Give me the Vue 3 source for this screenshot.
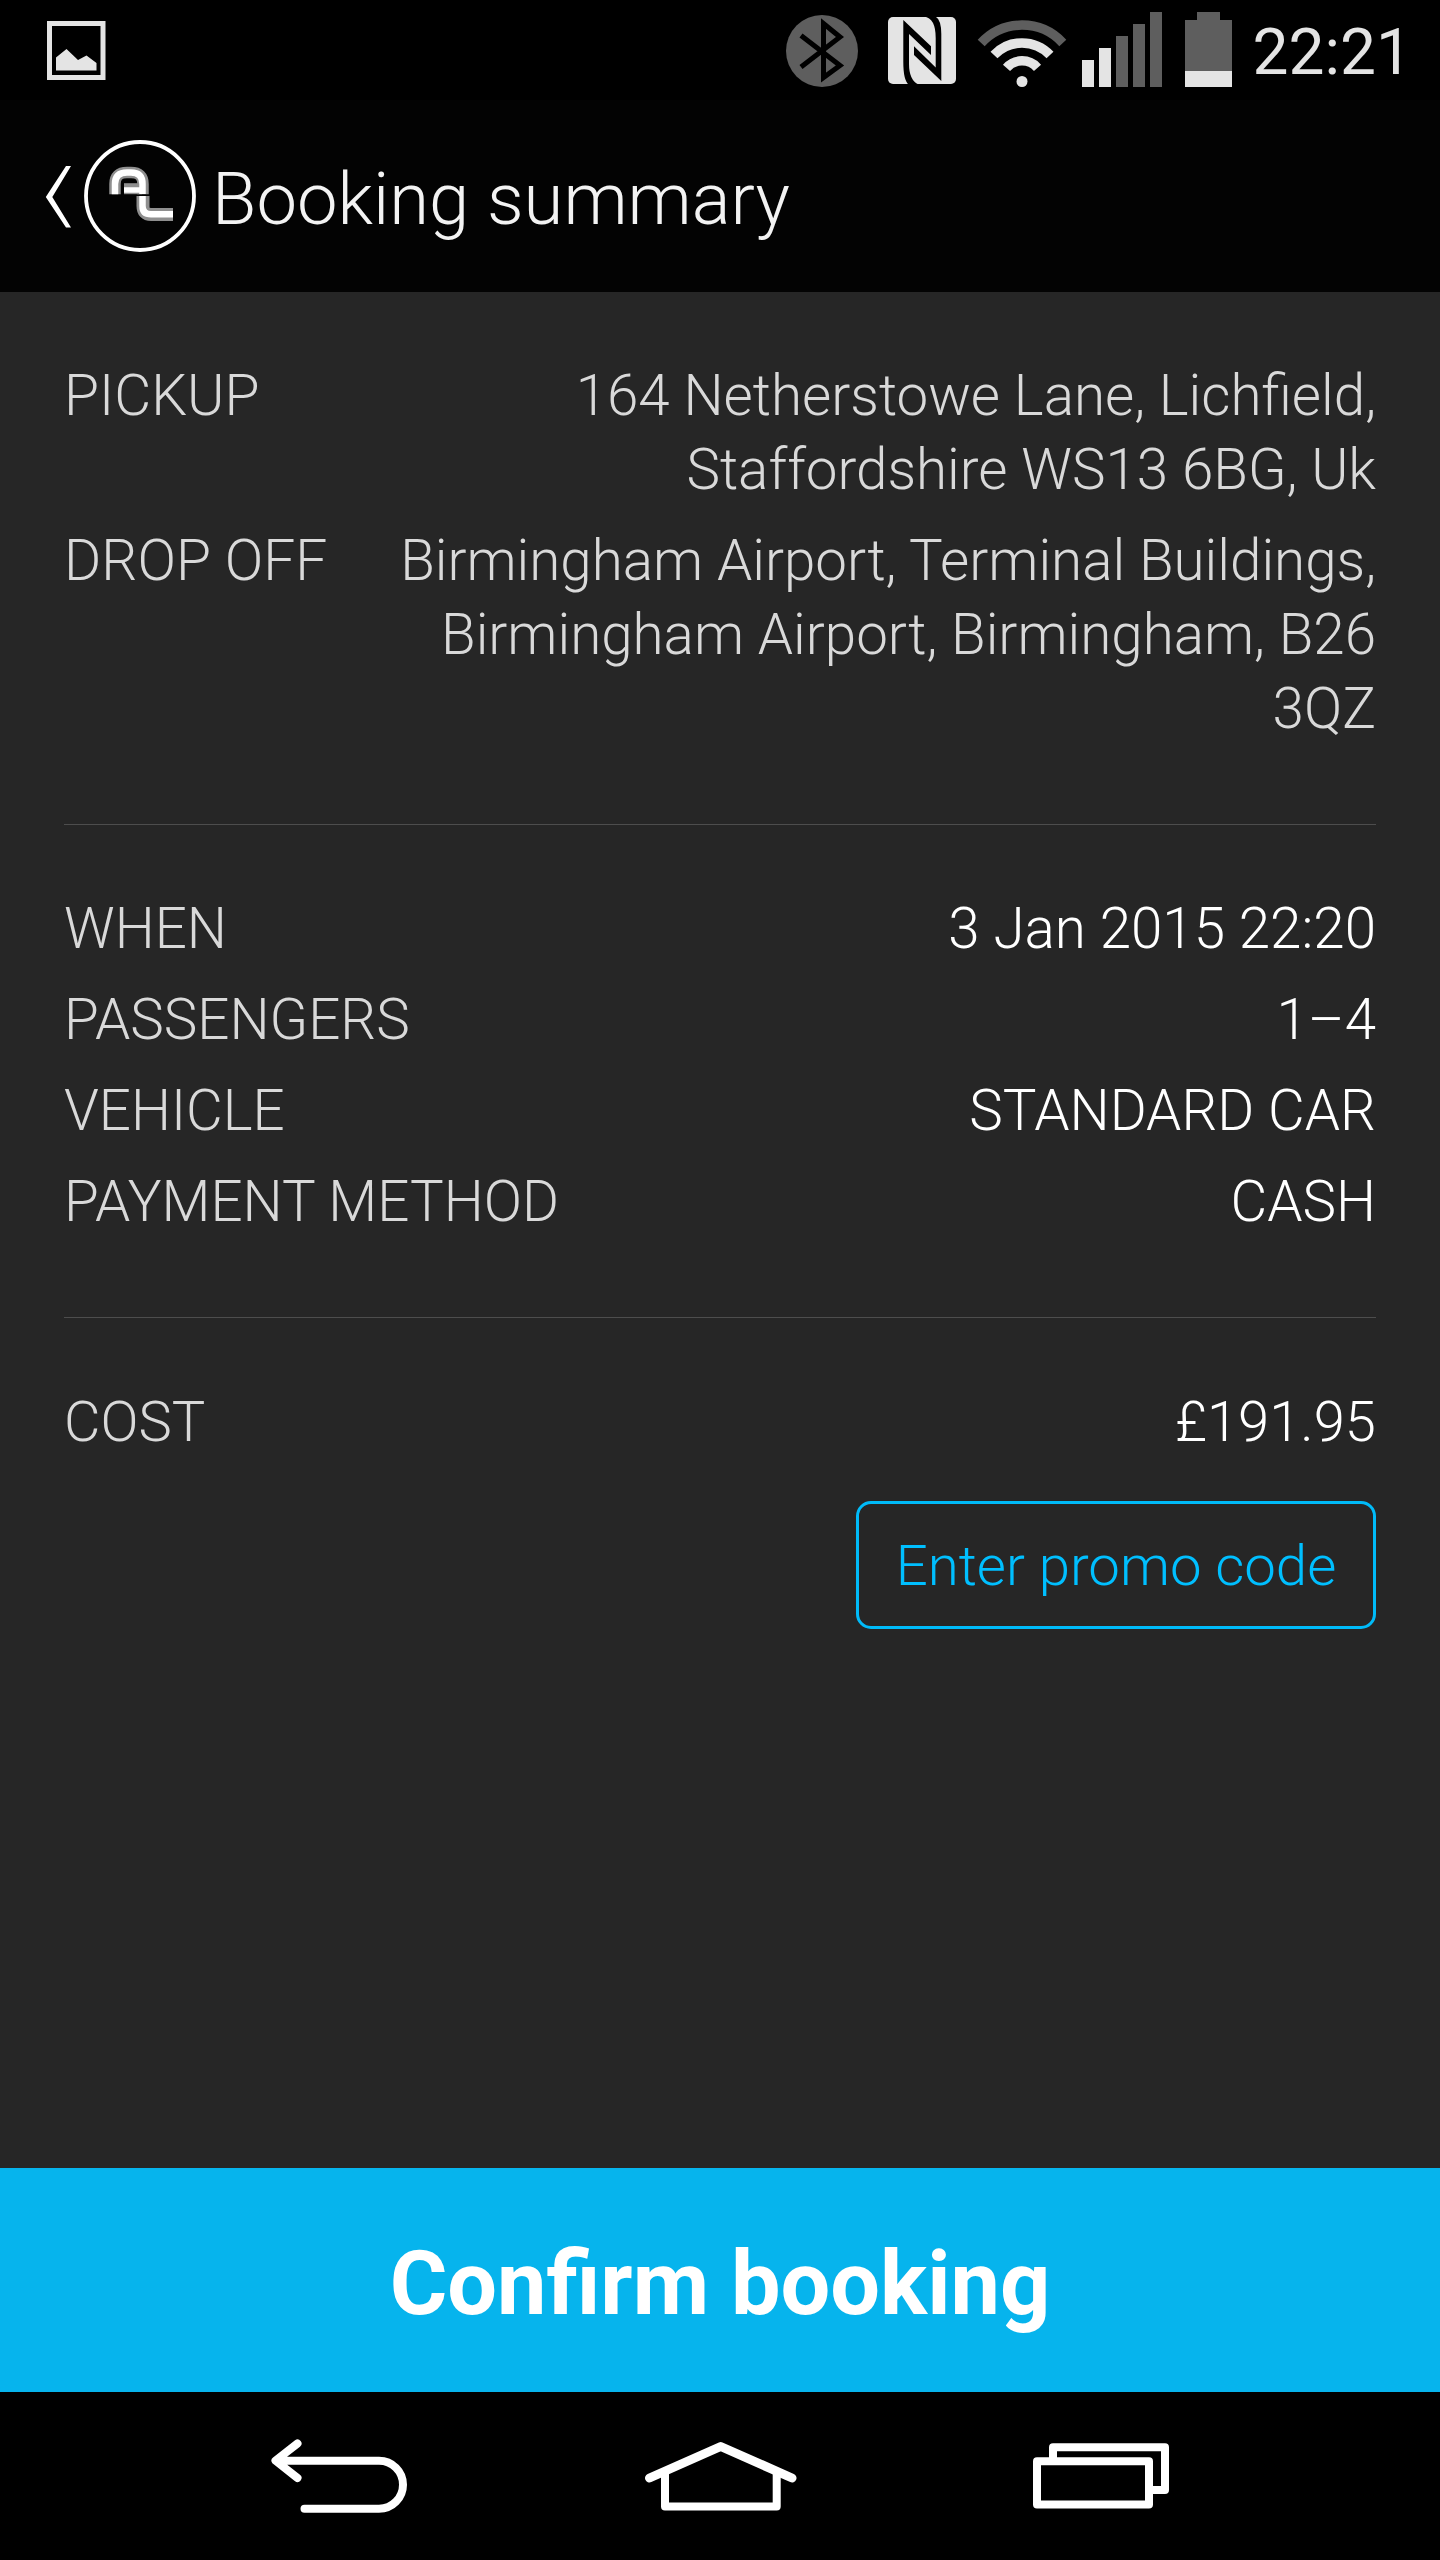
<script setup>
const route = [
  { label: 'PICKUP', value: '164 Netherstowe Lane, Lichfield, Staffordshire WS13 6BG, Uk' },
  { label: 'DROP OFF', value: 'Birmingham Airport, Terminal Buildings, Birmingham Airport, Birmingham, B26 3QZ' },
]
const details = [
  { label: 'WHEN', value: '3 Jan 2015 22:20' },
  { label: 'PASSENGERS', value: '1–4' },
  { label: 'VEHICLE', value: 'STANDARD CAR' },
  { label: 'PAYMENT METHOD', value: 'CASH' },
]
</script>

<template>
  <div class="screen">
    <header class="status">
      <svg class="shot" width="60" height="60" viewBox="0 0 60 60">
        <rect x="3.5" y="3.5" width="53.5" height="54" fill="none" stroke="#e4e4e4" stroke-width="5" />
        <path d="M10 37.500L20.500 29L32 40L40.500 35.500L50.500 43V50.500H10Z" fill="#e4e4e4" />
      </svg>

      <!-- bluetooth, NFC, wifi, signal, battery -->
      <svg class="indicators" width="450" height="100" viewBox="784 0 450 100">
        <circle cx="822" cy="51" r="36" fill="#5e5e5e" />
        <path d="M801 35.500L840 65.500L823.500 77.500V23.500L840 37L801 67" fill="none" stroke="#000" stroke-width="5" />

        <rect x="888" y="17" width="68" height="67" rx="5" fill="#e4e4e4" />
        <path d="M903.300 20L931 46.300V55L909 34V64Q909 80 918.500 84.500H908.500Q903.300 80 903.300 62Z" fill="#000" />
        <path d="M914 46.300V55L941.300 81V34Q941.300 20 935.500 16.500H924Q935.700 18 935.700 38V67.500Z" fill="#000" />

        <g fill="none" stroke-width="9.5">
          <path d="M981.200 43A55.500 55.500 0 0 1 1062.800 43" stroke="#5e5e5e" />
          <path d="M994 55A38.500 38.500 0 0 1 1050 55" stroke="#e4e4e4" />
          <path d="M1006.500 67.800A20.800 20.800 0 0 1 1037.500 67.800" stroke="#e4e4e4" />
        </g>
        <circle cx="1022" cy="81.500" r="5.500" fill="#e4e4e4" />

        <path d="M1082 60h12v27h-12zM1099 48h12v39h-12z" fill="#e4e4e4" />
        <path d="M1116 36h12v51h-12zM1133 24h12v63h-12zM1150 12h12v75h-12z" fill="#5e5e5e" />

        <path d="M1197 12h23v8h12v51h-47V20h12z" fill="#5e5e5e" />
        <path d="M1185 71h47v16h-47z" fill="#e4e4e4" />
      </svg>
      <time class="clock">22:21</time>
    </header>

    <div class="titlebar">
      <svg class="brand" width="160" height="120" viewBox="40 136 160 120">
        <path d="M66 166H71L52.300 197L71 227.500H66L45.800 197Z" fill="#fff" />
        <circle cx="140" cy="196" r="54" fill="none" stroke="#fff" stroke-width="3.800" />
        <g fill="none">
          <path d="M115 194.300V184Q115 172.500 127 172.500H131Q143 172.500 143 184V194.300" stroke="#8f8f8f" stroke-width="11.500" />
          <path d="M124 188.700H142" stroke="#8f8f8f" stroke-width="11" />
          <path d="M115 194.300V184Q115 172.500 127 172.500H131Q142.500 172.500 142.500 184V194" stroke="#fff" stroke-width="6.500" />
          <path d="M124 190H144" stroke="#fff" stroke-width="5.500" />
          <path d="M143 196V206Q143 214.500 151 214.500H173" stroke="#8f8f8f" stroke-width="13" />
          <path d="M142.500 196V206Q142.500 214.300 151 214.300H173" stroke="#fff" stroke-width="6.500" />
        </g>
      </svg>
      <h1>Booking summary</h1>
    </div>

    <main class="summary">
      <section class="route">
        <div v-for="r in route" :key="r.label" class="row">
          <span class="label">{{ r.label }}</span>
          <span class="value">{{ r.value }}</span>
        </div>
      </section>
      <section class="details">
        <div v-for="r in details" :key="r.label" class="row">
          <span class="label">{{ r.label }}</span>
          <span class="value">{{ r.value }}</span>
        </div>
      </section>
      <section class="cost">
        <div class="row">
          <span class="label">COST</span>
          <span class="value">£191.95</span>
        </div>
        <button class="promo">Enter promo code</button>
      </section>
    </main>

    <button class="confirm">Confirm booking</button>

    <nav class="nav">
      <svg width="144" height="88" viewBox="268 2434 144 88" fill="none" stroke="#fff" stroke-width="8" stroke-linecap="round" stroke-linejoin="round">
        <path d="M297.500 2443.500L275.500 2460.700L297.500 2478M276 2460.700H379A24 24 0 0 1 379 2508.700H304.500" />
      </svg>
      <svg width="152" height="88" viewBox="645 2434 152 88" fill="none" stroke="#fff" stroke-width="8" stroke-linecap="round" stroke-linejoin="round">
        <path d="M649.500 2478L720.700 2446.500L792 2478" stroke-width="9" />
        <path d="M665 2474V2506.500H776.700V2474" />
      </svg>
      <svg width="144" height="88" viewBox="1029 2434 144 88" fill="none" stroke="#fff" stroke-width="8" stroke-linejoin="round">
        <path d="M1053 2459V2447.300H1165V2490H1152" />
        <rect x="1037" y="2461.300" width="112" height="43.200" />
      </svg>
    </nav>
  </div>
</template>

<style>
body {
  margin: 0;
  background: #000;
}
</style>

<style scoped>
.screen {
  display: flex;
  flex-direction: column;
  width: 1440px;
  height: 2560px;
  background: #262626;
  font-family: Roboto, sans-serif;
  font-weight: 300;
  overflow: hidden;
}
.status {
  display: flex;
  align-items: center;
  box-sizing: border-box;
  height: 100px;
  padding-left: 46px;
  background: #000;
}
.indicators {
  margin-left: auto;
}
.clock {
  width: 187.500px;
  margin-left: 18.500px;
  padding-top: 6px;
  font-size: 64px;
  line-height: 64px;
  font-weight: 400;
  color: #e4e4e4;
}
.titlebar {
  display: flex;
  align-items: center;
  height: 192px;
  padding-left: 40px;
  background: #030303;
}
.titlebar h1 {
  margin: 0 0 0 12px;
  padding-top: 7px;
  font-size: 72.400px;
  line-height: 80px;
  font-weight: 300;
  color: #f3f3f3;
}
.summary {
  flex: 1;
  padding: 67px 64px 0;
  font-size: 56.500px;
  line-height: 74px;
}
.row {
  display: flex;
  justify-content: space-between;
  gap: 64px;
}
.label {
  flex: none;
  color: #d9d9d9;
}
.value {
  text-align: right;
  color: #fff;
}
.route,
.details {
  display: flex;
  flex-direction: column;
  gap: 17px;
  padding-bottom: 78px;
  border-bottom: 1px solid #4d4d4d;
}
.route .label {
  font-size: 56.900px;
}
.route .value {
  color: #d9d9d9;
}
.details {
  padding-top: 67px;
}
.cost {
  display: flex;
  flex-direction: column;
  padding-top: 67px;
  font-size: 56.100px;
}
.promo {
  align-self: flex-end;
  box-sizing: border-box;
  width: 520px;
  height: 128px;
  margin-top: 42px;
  padding: 1px 0 0;
  border: 3px solid #00bbf9;
  border-radius: 15px;
  background: none;
  font: inherit;
  font-size: 56.350px;
  color: #00bfff;
}
.confirm {
  height: 224px;
  padding: 7px 0 0;
  border: 0;
  background: #06b4ed;
  font: 700 88.200px/100px Roboto, sans-serif;
  color: #fff;
}
.nav {
  display: flex;
  align-items: center;
  justify-content: space-between;
  box-sizing: border-box;
  height: 168px;
  padding: 4px 267px 0 268px;
  background: #000;
}
</style>
